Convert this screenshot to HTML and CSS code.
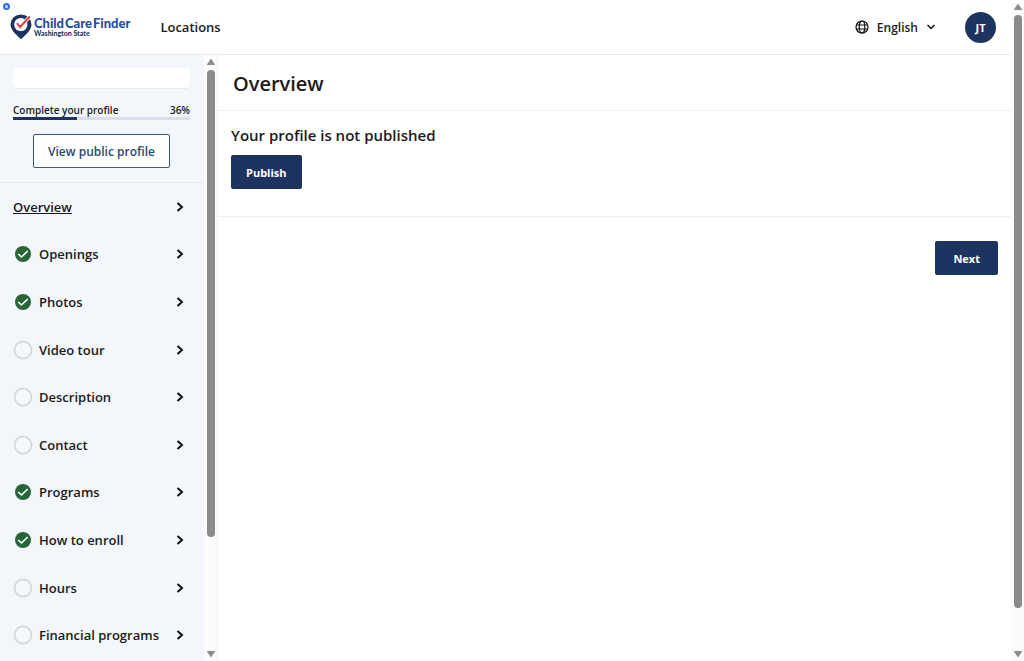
FILE: index.html
```
<!DOCTYPE html>
<html lang="en">
<head>
    <meta charset="UTF-8">
    <meta name="viewport" content="width=device-width, initial-scale=1.0">
    <title>Child Care Finder - Overview</title>
    <link rel="stylesheet" href="styles.css">
</head>
<body>
    <svg width="0" height="0" class="defs" aria-hidden="true">
        <symbol id="chevron" viewBox="0 0 8 12">
            <path d="M1.500 2 6 6 1.500 10" fill="none" stroke="#111" stroke-width="2"/>
        </symbol>
        <symbol id="done" viewBox="0 0 20 20">
            <circle cx="10" cy="10" r="8" fill="#28663a"/>
            <path d="M5.200 10 8.500 13 14.700 7" fill="none" stroke="#fff" stroke-width="1.600"/>
        </symbol>
        <symbol id="todo" viewBox="0 0 20 20">
            <circle cx="10" cy="10" r="8.500" fill="#f5f8fb" stroke="#d5d9dd" stroke-width="1.800"/>
        </symbol>
        <symbol id="arrow-up" viewBox="0 0 10 8">
            <path d="M5 1.2 8.6 6.6H1.4Z" fill="#8b8b8b" stroke="#8b8b8b" stroke-linejoin="round"/>
        </symbol>
        <symbol id="arrow-down" viewBox="0 0 10 8">
            <path d="M5 6.8 8.6 1.4H1.4Z" fill="#8b8b8b" stroke="#8b8b8b" stroke-linejoin="round"/>
        </symbol>
    </svg>

    <span class="marker"></span>

    <div class="page">
        <header class="header">
            <a href="#" class="logo">
                <svg width="22" height="26" viewBox="0 0 22 26" aria-hidden="true">
                    <path d="M11 25.5C9 22.5 .5 17 .5 10.4a10.5 10 0 0 1 21 0C21.500 17 13 22.500 11 25.500Z" fill="#1c3560"/>
                    <circle cx="10.800" cy="10.500" r="6.600" fill="#fff"/>
                    <path d="M6.800 9.500 10 13 19.500 3" fill="none" stroke="#fff" stroke-width="3.600"/>
                    <path d="M7 9.200 10 13 19.800 2.500" fill="none" stroke="#e03a3e" stroke-width="1.900"/>
                </svg>
                <span class="logo-text">
                    <span class="logo-name"><span>Child</span><span>Care</span><span>Finder</span></span>
                    <span class="logo-state">Washington State</span>
                </span>
            </a>
            <a href="#" class="header-link">Locations</a>
            <button class="language">
                <svg width="14" height="14" viewBox="0 0 14 14" fill="none" stroke="#111" stroke-width="1.2" aria-hidden="true">
                    <circle cx="7" cy="7" r="6"/>
                    <ellipse cx="7" cy="7" rx="2.800" ry="6"/>
                    <path d="M1.500 5h11M1.500 9h11"/>
                </svg>
                English
                <svg width="10" height="8" viewBox="0 0 10 8" aria-hidden="true">
                    <path d="M1.500 2 5 5.500 8.500 2" fill="none" stroke="#111" stroke-width="1.500"/>
                </svg>
            </button>
            <button class="avatar">JT</button>
        </header>

        <div class="body">
            <aside class="sidebar">
                <div class="profile">
                    <div class="provider"></div>
                    <div class="progress-label">
                        <span>Complete your profile</span>
                        <span>36%</span>
                    </div>
                    <div class="progress"><div class="progress-bar" style="width: 36%"></div></div>
                    <button class="btn-outline">View public profile</button>
                </div>
                <nav class="menu">
                    <a href="#" class="active"><span>Overview</span><svg class="chevron"><use href="#chevron"/></svg></a>
                    <a href="#"><svg class="status"><use href="#done"/></svg><span>Openings</span><svg class="chevron"><use href="#chevron"/></svg></a>
                    <a href="#"><svg class="status"><use href="#done"/></svg><span>Photos</span><svg class="chevron"><use href="#chevron"/></svg></a>
                    <a href="#"><svg class="status"><use href="#todo"/></svg><span>Video tour</span><svg class="chevron"><use href="#chevron"/></svg></a>
                    <a href="#"><svg class="status"><use href="#todo"/></svg><span>Description</span><svg class="chevron"><use href="#chevron"/></svg></a>
                    <a href="#"><svg class="status"><use href="#todo"/></svg><span>Contact</span><svg class="chevron"><use href="#chevron"/></svg></a>
                    <a href="#"><svg class="status"><use href="#done"/></svg><span>Programs</span><svg class="chevron"><use href="#chevron"/></svg></a>
                    <a href="#"><svg class="status"><use href="#done"/></svg><span>How to enroll</span><svg class="chevron"><use href="#chevron"/></svg></a>
                    <a href="#"><svg class="status"><use href="#todo"/></svg><span>Hours</span><svg class="chevron"><use href="#chevron"/></svg></a>
                    <a href="#"><svg class="status"><use href="#todo"/></svg><span>Financial programs</span><svg class="chevron"><use href="#chevron"/></svg></a>
                </nav>
            </aside>
            <div class="scrollbar">
                <svg class="arrow"><use href="#arrow-up"/></svg>
                <div class="track"><div class="thumb thumb-side"></div></div>
                <svg class="arrow"><use href="#arrow-down"/></svg>
            </div>
            <main class="content">
                <div class="title"><h1>Overview</h1></div>
                <section class="publish">
                    <h2>Your profile is not published</h2>
                    <button class="btn">Publish</button>
                </section>
                <div class="actions">
                    <button class="btn btn-next">Next</button>
                </div>
            </main>
        </div>
    </div>

    <div class="scrollbar">
        <svg class="arrow"><use href="#arrow-up"/></svg>
        <div class="track"><div class="thumb thumb-page"></div></div>
        <svg class="arrow"><use href="#arrow-down"/></svg>
    </div>
</body>
</html>
```
FILE: styles.css
```
* {
    box-sizing: border-box;
}
body {
    margin: 0;
    height: 100vh;
    display: flex;
    overflow: hidden;
    background: #fff;
    color: #1b1b1b;
    font-family: "Open Sans", "Noto Sans", sans-serif;
    font-size: 13px;
    font-weight: 600;
}
a {
    color: inherit;
    text-decoration: none;
}
button {
    font: inherit;
    color: inherit;
    cursor: pointer;
}
h1, h2 {
    margin: 0;
    font-weight: 600;
}
.defs {
    position: absolute;
}
.marker {
    position: absolute;
    top: 3px;
    left: 3px;
    width: 7px;
    height: 7px;
    border: 2px solid #2f6fed;
    border-radius: 50%;
    background: #cfe0ff;
}
.page {
    flex: 1;
    min-width: 0;
    display: flex;
    flex-direction: column;
}

/* header */
.header {
    display: flex;
    align-items: center;
    height: 55px;
    padding: 0 15px 0 10px;
    border-bottom: 1px solid #ebebeb;
}
.logo {
    display: flex;
    align-items: center;
    gap: 2px;
    margin-right: 30px;
}
.logo-text {
    display: flex;
    flex-direction: column;
    font-family: Lato, sans-serif;
    font-weight: 900;
}
.logo-name {
    display: flex;
    gap: 1px;
    font-size: 13px;
    line-height: 13px;
    color: #2650a0;
}
.logo-state {
    font-size: 7px;
    line-height: 7px;
    color: #1c3560;
}
.language {
    display: flex;
    align-items: center;
    gap: 8px;
    margin-left: auto;
    margin-right: 29px;
    padding: 0;
    border: none;
    background: none;
    font-size: 12px;
}
.avatar {
    width: 31px;
    height: 31px;
    padding: 0;
    border: none;
    border-radius: 50%;
    background: #1d3461;
    color: #fff;
    font-size: 11px;
    font-weight: 700;
}

/* sidebar */
.body {
    flex: 1;
    min-height: 0;
    display: flex;
}
.sidebar {
    flex: 0 0 204px;
    display: flex;
    flex-direction: column;
    background: #f3f6fb;
}
.profile {
    padding: 13px 14px 14px 13px;
    border-bottom: 1px solid #e3e7ec;
}
.provider {
    height: 20px;
    border-radius: 4px;
    background: #fff;
    box-shadow: 0 1px 1px #e6e9ee;
}
.progress-label {
    display: flex;
    justify-content: space-between;
    margin-top: 15px;
    font-size: 10px;
    line-height: 14px;
}
.progress {
    height: 3px;
    background: #d9dfe9;
}
.progress-bar {
    height: 100%;
    background: #1d3461;
}
.btn-outline {
    display: block;
    margin: 14px auto 0;
    height: 34px;
    padding: 0 14px;
    border: 1px solid #3d5583;
    border-radius: 2px;
    background: #fff;
    color: #2f466f;
    font-size: 12px;
}
.menu {
    flex: 1;
    display: grid;
    grid-auto-rows: 1fr;
    padding-bottom: 2px;
}
.menu a {
    display: flex;
    align-items: center;
    gap: 6px;
    padding: 0 20px 0 13px;
}
.menu .active span {
    text-decoration: underline;
}
.status {
    width: 20px;
    height: 20px;
}
.chevron {
    width: 8px;
    height: 12px;
    margin-left: auto;
}

/* scrollbars */
.scrollbar {
    flex: 0 0 13px;
    display: flex;
    flex-direction: column;
    align-items: center;
    gap: 4px;
    padding: 3px 0;
    background: #fcfcfc;
}
.arrow {
    width: 10px;
    height: 8px;
}
.track {
    flex: 1;
}
.thumb {
    width: 8px;
    border-radius: 4px;
    background: #8b8b8b;
}
.thumb-side {
    height: 81%;
}
.thumb-page {
    height: 94%;
}

/* content */
.content {
    flex: 1;
    border-left: 1px solid #f2f2f2;
}
.title {
    padding: 15px 15px 12px;
    border-bottom: 1px solid #f0f0f0;
}
.title h1 {
    font-size: 20px;
    line-height: 28px;
}
.publish {
    padding: 13px 13px 27px;
    border-bottom: 1px solid #f0f0f0;
}
.publish h2 {
    margin-bottom: 9px;
    font-size: 15px;
    line-height: 22px;
}
.btn {
    height: 34px;
    padding: 0 15px;
    border: none;
    border-radius: 2px;
    background: #1d3461;
    color: #fff;
    font-size: 11px;
    font-weight: 700;
}
.btn-next {
    padding: 0 18px;
}
.actions {
    display: flex;
    justify-content: flex-end;
    padding: 24px 13px;
}
```
